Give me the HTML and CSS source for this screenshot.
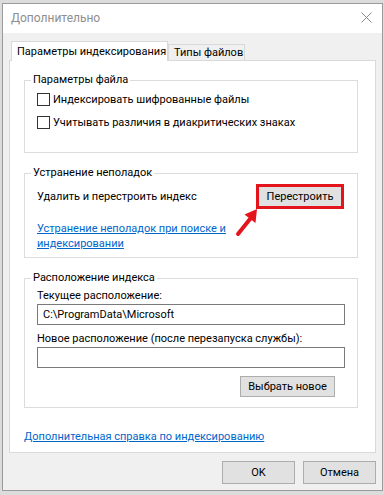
FILE: index.html
```html
<!DOCTYPE html>
<html lang="ru">
<head>
    <meta charset="UTF-8">
    <title>Дополнительно</title>
    <link rel="stylesheet" href="styles.css">
</head>
<body>
    <div class="window">
        <div class="titlebar">
            <span class="title">Дополнительно</span>
            <svg class="close" width="11" height="11" viewBox="0 0 11 11">
                <path d="M0.5 0.5 L10.5 10.5 M10.5 0.5 L0.5 10.5" stroke="#8a8a8a" stroke-width="1" fill="none"/>
            </svg>
        </div>

        <div class="client">
            <div class="tabs">
                <div class="tab active">Параметры индексирования</div>
                <div class="tab">Типы файлов</div>
            </div>

            <div class="panel">
                <fieldset class="group files">
                    <legend>Параметры файла</legend>
                    <label class="check"><span class="box"></span>Индексировать шифрованные файлы</label>
                    <label class="check"><span class="box"></span>Учитывать различия в диакритических знаках</label>
                </fieldset>

                <fieldset class="group trouble">
                    <legend>Устранение неполадок</legend>
                    <div class="row">
                        <span>Удалить и перестроить индекс</span>
                        <span class="mark">
                            <button class="btn rebuild">Перестроить</button>
                            <svg class="arrow" width="32" height="34" viewBox="0 0 32 34">
                                <path d="M7 29 L19 14" stroke="#e3141c" stroke-width="4" stroke-linecap="round" fill="none"/>
                                <polygon points="26,4 24.5,18 13.5,9.5" fill="#e3141c"/>
                            </svg>
                        </span>
                    </div>
                    <a class="link two" href="#">Устранение неполадок при поиске и<br>индексировании</a>
                </fieldset>

                <fieldset class="group place">
                    <legend>Расположение индекса</legend>
                    <div class="caption">Текущее расположение:</div>
                    <input class="field" type="text" value="C:\ProgramData\Microsoft" readonly>
                    <div class="caption">Новое расположение (после перезапуска службы):</div>
                    <input class="field" type="text" value="" readonly>
                    <div class="right">
                        <button class="btn choose">Выбрать новое</button>
                    </div>
                </fieldset>

                <a class="link help" href="#">Дополнительная справка по индексированию</a>
            </div>

            <div class="actions">
                <button class="btn dlg">OK</button>
                <button class="btn dlg">Отмена</button>
            </div>
        </div>
    </div>
</body>
</html>
```

FILE: styles.css
```css
* {
    box-sizing: border-box;
}

body {
    margin: 0;
    padding: 3px 0 0 2px;
    background: #dcdcdc;
    font-family: Roboto, "Noto Sans", sans-serif;
    font-size: 11px;
    color: #000;
}

.window {
    width: 381px;
    height: 488px;
    border: 1px solid #9a9a9a;
    background: #f0f0f0;
    display: flex;
    flex-direction: column;
}

.titlebar {
    height: 29px;
    background: #fff;
    display: flex;
    align-items: center;
    justify-content: space-between;
    padding: 0 10px 2px 8px;
}

.title {
    color: #8e8e8e;
    font-size: 12px;
}

.close {
    display: block;
}

.client {
    flex: 1;
    padding: 8px 6px 0 6px;
    display: flex;
    flex-direction: column;
}

.tabs {
    display: flex;
    align-items: flex-end;
    padding-left: 2px;
    height: 19px;
}

.tab {
    height: 16px;
    line-height: 15px;
    padding-left: 5px;
    border: 1px solid #d9d9d9;
    border-bottom: none;
    background: #f0f0f0;
    width: 77px;
    white-space: nowrap;
}

.tab.active {
    height: 20px;
    line-height: 19px;
    width: 157px;
    background: #fff;
    margin-bottom: -1px;
    position: relative;
    z-index: 1;
}

.panel {
    height: 393px;
    background: #fff;
    border: 1px solid #d9d9d9;
    padding: 11px 17px 0 14px;
}

.group {
    margin: 0;
    padding: 0 12px;
    border: 1px solid #dcdcdc;
}

.group legend {
    margin-left: -6px;
    padding: 0 2px;
    line-height: 16px;
}

.files {
    height: 81px;
    padding-top: 3px;
}

.check {
    display: flex;
    align-items: center;
    height: 16px;
    margin-bottom: 7px;
    white-space: nowrap;
}

.box {
    width: 13px;
    height: 13px;
    border: 1px solid #333;
    background: #fff;
    margin-right: 3px;
}

.trouble {
    margin-top: 12px;
    height: 93px;
    padding-top: 3px;
}

.row {
    display: flex;
    justify-content: space-between;
    align-items: center;
    padding-right: 1px;
}

.mark {
    position: relative;
}

.btn {
    font-family: inherit;
    font-size: 11px;
    color: #000;
    background: #e1e1e1;
    border: 1px solid #adadad;
    padding: 0;
}

.rebuild {
    width: 88px;
    height: 25px;
    border: 3px solid #e3141c;
    display: block;
}

.arrow {
    position: absolute;
    left: -25px;
    top: 21px;
}

.link {
    color: #0066cc;
    text-decoration: underline;
    display: block;
}

.two {
    margin-top: 12px;
    line-height: 15px;
}

.place {
    margin-top: 12px;
    height: 138px;
    padding-top: 2px;
}

.caption {
    line-height: 16px;
    white-space: nowrap;
}

.field {
    display: block;
    width: 100%;
    height: 21px;
    border: 1px solid #7a7a7a;
    padding: 0 5px;
    font-family: inherit;
    font-size: 11px;
    margin: 0 0 6px;
    outline: none;
}

.right {
    display: flex;
    justify-content: flex-end;
    padding: 2px 10px 0 0;
}

.choose {
    width: 95px;
    height: 21px;
}

.help {
    margin-top: 21px;
    line-height: 16px;
}

.actions {
    display: flex;
    justify-content: flex-end;
    gap: 8px;
    padding-top: 8px;
}

.dlg {
    width: 73px;
    height: 23px;
}
```
